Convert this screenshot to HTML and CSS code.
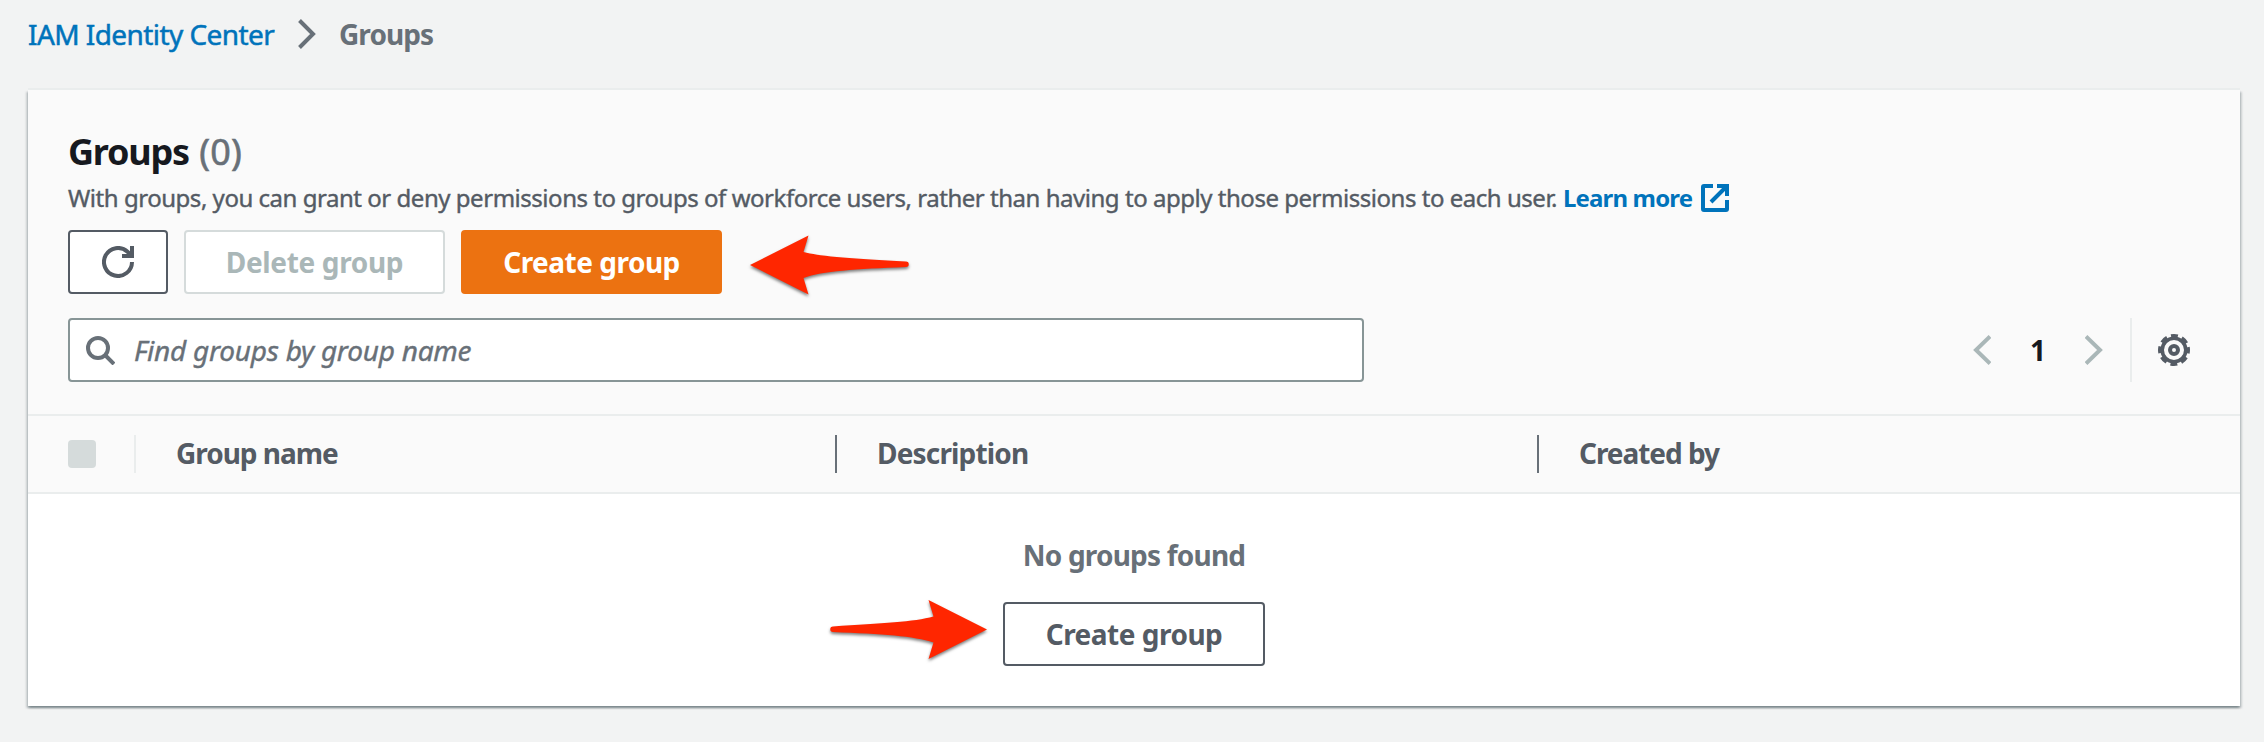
FILE: index.html
```html
<!DOCTYPE html>
<html lang="en">
<head>
<meta charset="utf-8">
<title>Groups</title>
<link rel="stylesheet" href="styles.css">
</head>
<body>
<nav class="breadcrumb">
  <a class="crumb-link" href="#">IAM Identity Center</a>
  <svg class="crumb-sep" viewBox="0 0 18 30"><path d="M1.500 1.500L15 15L1.500 28.500"/></svg>
  <span class="crumb-current">Groups</span>
</nav>
<main class="panel">
  <header class="panel-header">
    <h1 class="title">Groups <span class="count">(0)</span></h1>
    <p class="description"><span>With groups, you can grant or deny permissions to groups of workforce users, rather than having to apply those permissions to each user.</span>
      <a class="learn" href="#">Learn more</a>
      <svg class="external" viewBox="0 0 28 28"><path d="M12 2H3Q2 2 2 3V25Q2 26 3 26H25Q26 26 26 25V16M16 2H26V12M26 2L10 18"/></svg>
    </p>
    <div class="actions">
      <button class="btn btn-icon" aria-label="Refresh"><svg class="refresh" viewBox="0 0 32 32"><path d="M30 16A14 14 0 1 1 25.500 5.700L29 9M30 0V10H20"/></svg></button>
      <button class="btn btn-disabled">Delete group</button>
      <button class="btn btn-primary">Create group</button>
      <svg class="arrow arrow-left" viewBox="0 0 160 62"><path d="M0 31L58.500 1.500L53.500 18C73 23 105 24.500 156 27.500A2.700 2.700 0 0 1 156 33C105 35 73 37 53.500 44L58.500 60.500Z"/></svg>
    </div>
    <div class="tools">
      <div class="search">
        <svg class="search-icon" viewBox="0 0 29 29"><circle cx="12" cy="12" r="10"/><path d="M19 19L28 28"/></svg>
        <span class="placeholder">Find groups by group name</span>
      </div>
      <div class="pager">
        <svg class="chevron" viewBox="0 0 18 30"><path d="M17 1.500L3 15L17 28.500"/></svg>
        <span class="page">1</span>
        <svg class="chevron" viewBox="0 0 18 30"><path d="M1 1.500L15 15L1 28.500"/></svg>
        <span class="rule"></span>
        <svg class="gear" viewBox="0 0 32 32"><circle class="gear-ring" cx="16" cy="16" r="11.800"/><circle class="gear-teeth" cx="16" cy="16" r="14.400"/><circle cx="16" cy="16" r="4"/></svg>
      </div>
    </div>
  </header>
  <div class="columns">
    <div class="col col-check"><span class="checkbox"></span></div>
    <div class="col col-name">Group name</div>
    <div class="col col-desc">Description</div>
    <div class="col col-created">Created by</div>
  </div>
  <section class="empty">
    <p class="empty-text">No groups found</p>
    <div class="empty-action">
      <button class="btn btn-outline">Create group</button>
      <svg class="arrow arrow-right" viewBox="0 0 160 62"><path d="M0 30.500L58.500 1L53.500 17.500C73 23 105 24 154 27.500A2.700 2.700 0 0 1 154 33C105 35 73 37 53.500 43.500L58.500 60Z"/></svg>
    </div>
  </section>
</main>
</body>
</html>
```

FILE: styles.css
```css
* { box-sizing: border-box; }
body {
  margin: 0;
  height: 742px;
  background: #f2f3f3;
  color: #545b64;
  font: 28px/36px "Noto Sans", sans-serif;
  overflow: hidden;
}
svg { display: block; flex: none; fill: none; }
h1, p { margin: 0; }
a { text-decoration: none; color: #0073bb; }

.breadcrumb {
  display: flex;
  align-items: center;
  height: 68px;
  padding-left: 28px;
}
.crumb-link { width: 270px; letter-spacing: -0.57px; white-space: nowrap; -webkit-text-stroke: .5px; }
.crumb-sep { width: 18px; height: 30px; stroke: #687078; stroke-width: 4; }
.crumb-current { margin-left: 23px; font-weight: 700; color: #687078; letter-spacing: -0.92px; }

.panel {
  width: 2212px;
  height: 616px;
  margin: 22px 0 0 28px;
  background: #fff;
  box-shadow: 0 -2px 0 0 #eaeded, 0 2px 2px 0 rgba(0, 28, 36, .3), 2px 2px 2px 0 rgba(0, 28, 36, .15), -2px 2px 2px 0 rgba(0, 28, 36, .15);
}
.panel-header {
  height: 326px;
  padding: 40px 40px 0;
  background: #fafafa;
  border-bottom: 2px solid #eaeded;
}
.title {
  font-size: 36px;
  line-height: 44px;
  color: #16191f;
  letter-spacing: -1.2px;
  white-space: nowrap;
}
.count { margin-left: 2px; font-weight: 400; color: #687078; letter-spacing: .3px; -webkit-text-stroke: .6px; }
.description {
  display: flex;
  align-items: center;
  height: 36px;
  margin-top: 6px;
  font-size: 24px;
  letter-spacing: -0.47px;
  white-space: nowrap;
}
.learn { margin-left: 6px; width: 138px; font-weight: 700; letter-spacing: -0.85px; }
.description > span { width: 1489px; -webkit-text-stroke: .4px; }
.external { width: 28px; height: 28px; stroke: #0073bb; stroke-width: 4; }

.actions { display: flex; gap: 16px; margin-top: 14px; position: relative; }
.btn {
  display: flex;
  align-items: center;
  justify-content: center;
  width: 261px;
  height: 64px;
  padding: 0;
  border: 2px solid #545b64;
  border-radius: 4px;
  background: #fff;
  color: #545b64;
  font: 700 28px/36px "Noto Sans", sans-serif;
  letter-spacing: -0.5px;
  white-space: nowrap;
}
.btn-icon { width: 100px; }
.refresh { width: 32px; height: 32px; stroke: #545b64; stroke-width: 4; }
.btn-disabled { border-color: #d5dbdb; color: #aab7b8; letter-spacing: -0.34px; }
.btn-primary { border-color: #ec7211; background: #ec7211; color: #fff; }
.btn-outline { width: 262px; }

.arrow {
  position: absolute;
  width: 160px;
  height: 62px;
  fill: #ff2600;
  filter: drop-shadow(0 2px 1.500px rgba(0, 0, 0, .5));
  overflow: visible;
}
.arrow-left { left: 682px; top: 4px; }
.arrow-right { left: -176px; top: -3px; }
.arrow-right path { transform: translateX(160px) scaleX(-1); }

.tools { display: flex; justify-content: space-between; margin-top: 24px; }
.search {
  display: flex;
  align-items: center;
  gap: 19px;
  width: 1296px;
  height: 64px;
  padding-left: 16px;
  border: 2px solid #879596;
  border-radius: 4px;
  background: #fff;
}
.search-icon { width: 29px; height: 29px; stroke: #687078; stroke-width: 4; }
.placeholder { font-style: italic; color: #687078; letter-spacing: -0.25px; -webkit-text-stroke: .4px; }
.pager { display: flex; align-items: center; width: 227px; }
.chevron { width: 18px; height: 30px; stroke: #aab7b8; stroke-width: 4; }
.page { width: 94px; text-align: center; font-weight: 700; color: #16191f; }
.rule { width: 2px; height: 64px; margin: 0 26px 0 27px; background: #eaeded; }
.gear { width: 32px; height: 32px; stroke: #545b64; stroke-width: 4; }
.gear-ring { stroke-width: 3.600px; }
.gear-teeth { stroke-width: 3.200px; stroke-dasharray: 7 4.310; stroke-dashoffset: 3.500; }

.columns {
  display: flex;
  align-items: center;
  height: 78px;
  background: #fafafa;
  border-bottom: 2px solid #eaeded;
}
.col {
  height: 38px;
  padding-left: 40px;
  border-right: 2px solid #687078;
  font-weight: 700;
  line-height: 37px;
  white-space: nowrap;
}
.col-check { display: flex; align-items: center; width: 108px; border-color: #eaeded; }
.checkbox { width: 28px; height: 28px; border-radius: 4px; background: #d5dbdb; }
.col-name { width: 701px; letter-spacing: -1.02px; }
.col-desc { width: 702px; letter-spacing: -0.83px; }
.col-created { border: 0; letter-spacing: -1.04px; }

.empty { display: flex; flex-direction: column; align-items: center; padding-top: 43px; }
.empty-text { font-weight: 700; color: #687078; letter-spacing: -0.8px; }
.empty-action { position: relative; margin-top: 29px; }
```
